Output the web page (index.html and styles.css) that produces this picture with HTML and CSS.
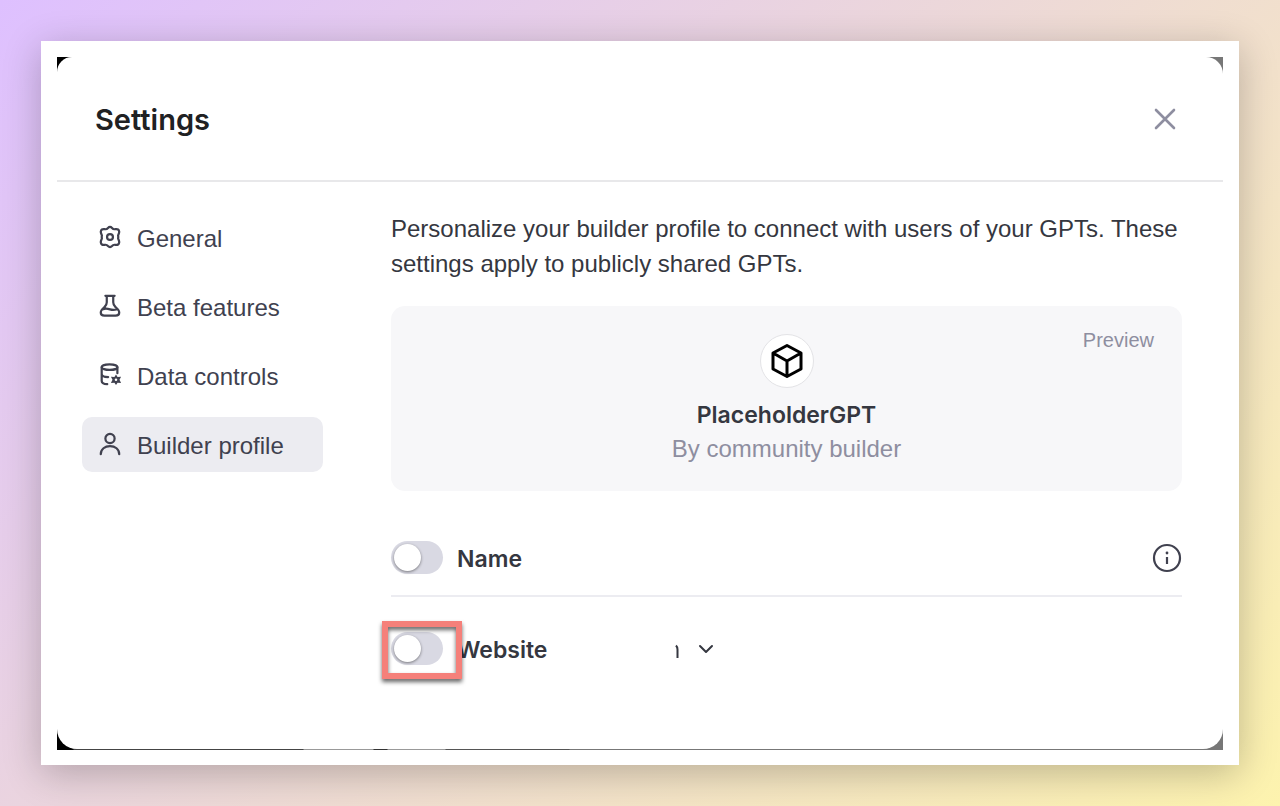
FILE: index.html
```html
<!DOCTYPE html>
<html lang="en">
<head>
<meta charset="utf-8">
<meta name="viewport" content="width=device-width, initial-scale=1">
<title>Settings</title>
<link rel="stylesheet" href="styles.css">
</head>
<body>
<div class="frame">
  <div class="backdrop">
    <div class="modal" role="dialog" aria-labelledby="title">
      <header class="header">
        <h1 class="title" id="title">Settings</h1>
        <button class="close" type="button" aria-label="Close">
          <svg width="22" height="22" viewBox="0 0 22 22" fill="none" stroke="#8e8ea0" stroke-width="2.600" stroke-linecap="round"><path d="M2 2l18 18M20 2L2 20"/></svg>
        </button>
      </header>
      <div class="body">
        <nav class="sidebar" aria-label="Settings sections">
          <button class="tab" type="button">
            <svg class="icon" viewBox="-1 -1 26 26"><path d="M9.800 2.200Q12 -.2 14.200 2.200Q15.600 4 17.800 3.500Q21.600 2.800 22 6.500Q21.800 8 21.200 9.200Q20.400 10.600 21 12Q20.400 13.400 21.200 14.800Q21.800 16 22 17.500Q21.600 21.200 17.800 20.500Q15.600 20 14.200 21.800Q12 24.200 9.800 21.800Q8.400 20 6.200 20.500Q2.400 21.200 2 17.500Q2.200 16 2.800 14.800Q3.600 13.400 3 12Q3.600 10.600 2.800 9.200Q2.200 8 2 6.500Q2.400 2.800 6.200 3.500Q8.400 4 9.800 2.200z"/><circle cx="12" cy="12" r="3.200"/></svg>
            General
          </button>
          <button class="tab" type="button">
            <svg class="icon" viewBox="-1 -1 26 26"><path d="M7 1h10M8.500 1v7c0 2-.9 3.700-2.300 5C4 15 2 16.500 2 19c0 2.400 1.600 3.500 4 3.500h12c2.400 0 4-1.100 4-3.500 0-2.500-2-4-4.200-6-1.400-1.300-2.300-3-2.300-5V1M4.500 15.500c3-1.200 5-.6 7.500.2s4.500.9 7.500-.2"/></svg>
            Beta features
          </button>
          <button class="tab" type="button">
            <svg class="icon" viewBox="-1 -1 26 26"><ellipse cx="11.500" cy="3.500" rx="8.500" ry="3"/><path d="M3 3.500v15c0 2 2.500 3.300 6 3.500M20 3.500v6.500M3 11c0 2 2.800 3.300 7 3.300"/><path class="cog" d="M18.500 11.500l1.700 2.600 3.800-.3-1.700 3.400 1.700 3.400-3.800-.3-1.700 2.600-1.700-2.600-3.800.3 1.700-3.400-1.700-3.400 3.800.3zM18.500 15.800a1.400 1.400 0 1 0 0 2.800 1.400 1.400 0 0 0 0-2.800z"/></svg>
            Data controls
          </button>
          <button class="tab tab-active" type="button" aria-current="page">
            <svg class="icon" viewBox="-1 -1 26 26"><circle cx="12" cy="6" r="5"/><path d="M2 23c0-5.500 4.500-8.700 10-8.700s10 3.200 10 8.700"/></svg>
            Builder profile
          </button>
        </nav>
        <main class="content">
          <p class="intro">Personalize your builder profile to connect with users of your GPTs. These settings apply to publicly shared GPTs.</p>
          <section class="preview">
            <span class="badge">Preview</span>
            <div class="avatar">
              <svg width="34" height="36" viewBox="0 0 34 36" fill="none" stroke="#000" stroke-width="3" stroke-linejoin="round" stroke-linecap="round"><path d="M17 2.500l14 7.500v16L17 33.500 3 26V10zM3.500 10.300L17 18l13.500-7.700M17 18v15"/></svg>
            </div>
            <h2 class="gpt-name">PlaceholderGPT</h2>
            <p class="gpt-author">By community builder</p>
          </section>
          <div class="row row-name">
            <div class="field">
              <span class="switch"><input class="toggle" type="checkbox" role="switch" id="name"></span>
              <label class="label" for="name">Name</label>
            </div>
            <button class="info" type="button" aria-label="About name">
              <svg width="30" height="30" viewBox="0 0 30 30" fill="none" stroke="#40414f" stroke-width="2.200"><circle cx="15" cy="15" r="13"/><path d="M15 14v7"/><circle cx="15" cy="10" r="1.400" fill="#40414f" stroke="none"/></svg>
            </button>
          </div>
          <div class="row row-website">
            <div class="field">
              <span class="switch switch-marked"><input class="toggle" type="checkbox" role="switch" id="website"></span>
              <label class="label" for="website">Website</label>
            </div>
            <div class="picker">
              <select class="select" aria-label="Website domain"><option></option></select>
              <svg class="picker-mark" width="46" height="24" viewBox="0 0 46 24" fill="none" stroke="#353740" stroke-width="2" stroke-linecap="round" stroke-linejoin="round"><path d="M8 8.500Q9.500 10 9.500 12.500V21" stroke-linecap="butt"/><path d="M32 9l6 6 6-6"/></svg>
            </div>
          </div>
        </main>
      </div>
    </div>
  </div>
</div>
</body>
</html>
```
FILE: styles.css
```css
* { box-sizing: border-box; }

body {
  margin: 0;
  min-height: 100vh;
  padding: 41px;
  display: flex;
  background: linear-gradient(135deg, #dec0ff, #fdf3ae);
  font-family: "Liberation Sans", Arial, sans-serif;
  font-size: 24px;
  line-height: 35px;
  color: #353740;
}

h1, h2, p { margin: 0; }

button {
  border: 0;
  padding: 0;
  background: none;
  font: inherit;
  color: inherit;
  cursor: pointer;
}

svg { display: block; }

.frame {
  flex: 1;
  display: flex;
  padding: 16px 16px 15px;
  background: #fff;
  box-shadow: 0 8px 36px rgba(0, 0, 0, 0.24);
}

.backdrop {
  flex: 1;
  display: flex;
  padding-bottom: 1px;
  background: linear-gradient(to right, #000 16px, #444 17px, #444 246px, #999 247px, #999 316px, #333 317px, #333 330px, #999 331px, #999 388px, #555 389px, #555 512px, #777 513px);
}

.modal {
  flex: 1;
  background: #fff;
  border-radius: 15px 17px 20px 20px;
}

.header {
  display: flex;
  align-items: center;
  justify-content: space-between;
  height: 125px;
  padding: 0 47px 0 38px;
  border-bottom: 2px solid #e8e8ea;
}

.title {
  padding-top: 2px;
  font: 600 29px/40px Inter, sans-serif;
  color: #202123;
}

.body {
  display: flex;
  gap: 68px;
  padding: 28px 41px 40px 25px;
}

.sidebar {
  flex: none;
  width: 241px;
  display: flex;
  flex-direction: column;
  gap: 14px;
}

.tab {
  display: flex;
  align-items: center;
  gap: 15px;
  height: 55px;
  padding: 2px 16px 0;
  border-radius: 10px;
  text-align: left;
  color: #40414f;
}

.tab-active { background: #ececf1; }

.icon {
  width: 24px;
  height: 24px;
  margin-bottom: 4px;
  fill: none;
  stroke: #40414f;
  stroke-width: 2.4;
  stroke-linecap: round;
  stroke-linejoin: round;
}

.cog {
  fill: #40414f;
  fill-rule: evenodd;
  stroke: none;
}

.content {
  flex: 1;
  min-width: 0;
  padding-top: 1px;
}

.preview {
  position: relative;
  display: flex;
  flex-direction: column;
  align-items: center;
  margin-top: 25px;
  padding: 28px 28px 25px;
  border-radius: 14px;
  background: #f7f7f9;
}

.badge {
  position: absolute;
  top: 17px;
  right: 28px;
  font-size: 20px;
  color: #8e8ea0;
}

.avatar {
  display: grid;
  place-items: center;
  width: 54px;
  height: 54px;
  margin-bottom: 8px;
  border: 1px solid #e3e3e6;
  border-radius: 50%;
  background: #fff;
}

.gpt-name,
.label {
  padding-top: 3px;
  font: 600 23px/32px Inter, sans-serif;
}

.gpt-author { color: #8e8ea0; }

.row {
  display: grid;
  grid-template-columns: 277px 1fr;
  align-items: center;
}

.row-name {
  margin-top: 49px;
  padding-bottom: 20px;
  border-bottom: 2px solid #ececf1;
}

.row-website { padding-top: 34px; }

.field {
  display: flex;
  align-items: center;
  gap: 14px;
}

.switch {
  position: relative;
  display: flex;
}

.toggle {
  appearance: none;
  display: flex;
  width: 52px;
  height: 33px;
  margin: 0;
  padding: 3px;
  border-radius: 17px;
  background: #d9d9e3;
  cursor: pointer;
}

.toggle::before {
  content: "";
  width: 27px;
  height: 27px;
  border-radius: 50%;
  background: #fff;
  box-shadow: 0 1px 3px rgba(0, 0, 0, 0.45);
}

.toggle:checked { justify-content: flex-end; }

.switch-marked::after {
  content: "";
  position: absolute;
  inset: -11px -19px -14px -9px;
  border: 6px solid #f5807a;
  filter: drop-shadow(0 3px 2px rgba(0, 0, 0, 0.6));
  pointer-events: none;
}

.info { justify-self: end; }

.picker {
  position: relative;
  width: 46px;
  height: 24px;
}

.select {
  appearance: none;
  width: 100%;
  height: 100%;
  border: 0;
  background: none;
}

.picker-mark {
  position: absolute;
  inset: 0;
  pointer-events: none;
}
```
